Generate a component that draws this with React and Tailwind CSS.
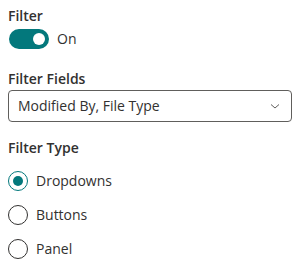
export default function App() {
  return (
    <div className="min-h-screen bg-white pl-2 text-[14px] text-[#323130]" style={{ fontFamily: '"Segoe UI", "Open Sans", sans-serif' }}>
      {/* Filter toggle */}
      <div className="pt-[6px] pb-[3px] font-semibold leading-5">Filter</div>
      <div className="flex h-5 items-center pl-px">
        <button className="flex h-5 w-10 items-center justify-end rounded-full bg-[#03787c] pr-[4px]">
          <span className="block h-3 w-3 rounded-full bg-white"></span>
        </button>
        <span className="ml-2 leading-5">On</span>
      </div>

      {/* Filter fields dropdown */}
      <div className="mt-5 mb-px font-semibold leading-5">Filter Fields</div>
      <div className="mr-[9px] flex h-8 items-center justify-between rounded-sm border border-[#605e5c] pl-[9px] pr-[10px]">
        <span className="leading-5">Modified By, File Type</span>
        <svg width="12" height="12" viewBox="0 0 12 12" className="text-[#605e5c]">
          <path d="M2 4.5 L6 8 L10 4.5" fill="none" stroke="currentColor" strokeWidth="1" />
        </svg>
      </div>

      {/* Filter type radios */}
      <div className="mt-4 font-semibold leading-5">Filter Type</div>
      <div className="mt-[13px] flex flex-col gap-[14px]">
        <label className="flex h-5 items-center">
          <span className="flex h-5 w-5 items-center justify-center rounded-full border border-[#03787c]">
            <span className="block h-[10px] w-[10px] rounded-full bg-[#03787c]"></span>
          </span>
          <span className="ml-2 leading-5">Dropdowns</span>
        </label>
        <label className="flex h-5 items-center">
          <span className="block h-5 w-5 rounded-full border border-[#323130]"></span>
          <span className="ml-2 leading-5">Buttons</span>
        </label>
        <label className="flex h-5 items-center">
          <span className="block h-5 w-5 rounded-full border border-[#323130]"></span>
          <span className="ml-2 leading-5">Panel</span>
        </label>
      </div>
    </div>
  )
}
